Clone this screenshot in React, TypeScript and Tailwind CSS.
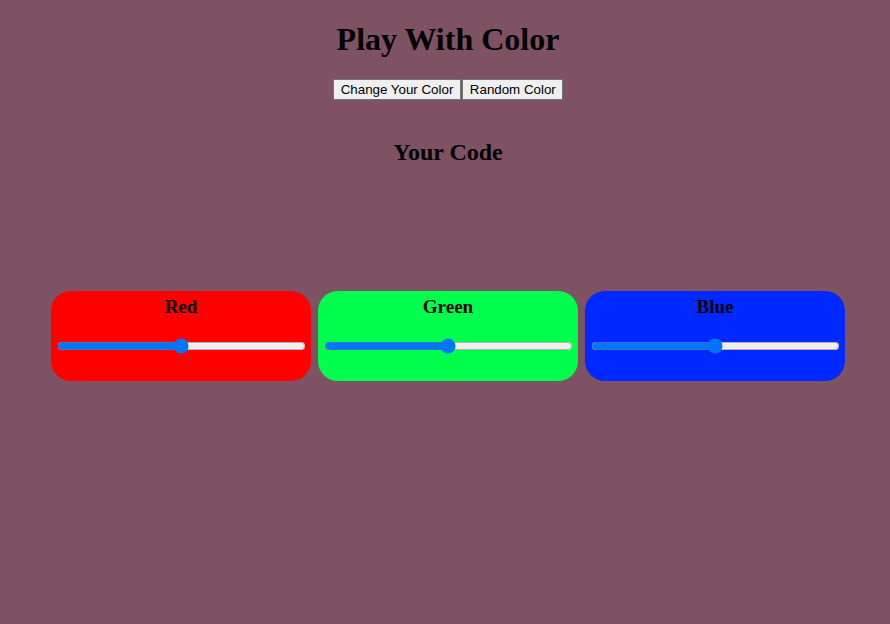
import React, { useState } from 'react';

const channels = [
  { id: 'red', label: 'Red', bg: 'bg-[#ff0000]' },
  { id: 'green', label: 'Green', bg: 'bg-[#00ff4c]' },
  { id: 'blue', label: 'Blue', bg: 'bg-[#0029ff]' },
];

export default function App() {
  const [values, setValues] = useState<Record<string, number>>({ red: 128, green: 128, blue: 128 });

  return (
    <div className="min-h-[624px] w-full bg-[#7f5263] pl-[6px] font-['Liberation_Serif',serif] text-black">
      <h1 className="pt-[21px] text-center text-[32px] font-bold leading-[37px]">Play With Color</h1>

      <div className="mt-[21px] flex justify-center font-['Liberation_Sans',Arial,sans-serif] text-[13.33px]">
        <button className="h-[21px] border border-[#767676] bg-[#efefef] px-[7px] leading-[15px] text-black">
          Change Your Color
        </button>
        <button className="ml-px h-[21px] border border-[#767676] bg-[#efefef] px-[6.5px] leading-[15px] text-black">
          Random Color
        </button>
      </div>

      <h2 className="mt-[38px] text-center text-[24px] font-bold leading-[28px]">Your Code</h2>

      <div className="mt-[125px] flex justify-center gap-[7px]">
        {channels.map((c) => (
          <div key={c.id} className={`flex h-[90px] w-[260px] flex-col items-center rounded-[20px] px-[4px] pt-[5px] ${c.bg}`}>
            <h3 className="text-[19px] font-bold leading-[21px]">{c.label}</h3>
            <input
              type="range"
              min={0}
              max={255}
              value={values[c.id]}
              onChange={(e) => setValues({ ...values, [c.id]: Number(e.target.value) })}
              className="mx-[2px] mt-[21px] w-[249px]"
            />
          </div>
        ))}
      </div>
    </div>
  );
}
